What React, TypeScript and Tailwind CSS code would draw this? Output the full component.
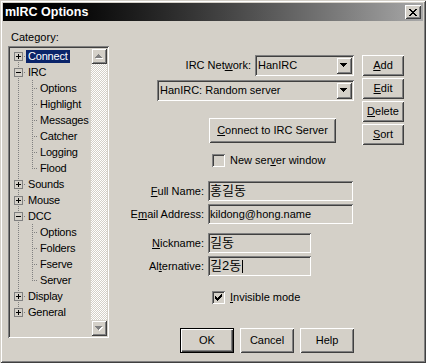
import React from 'react';

const FONT = "font-['Liberation_Sans','Noto_Sans_CJK_KR',sans-serif]";
const FRAME =
  'shadow-[inset_1px_1px_#d4d0c8,inset_-1px_-1px_#404040,inset_2px_2px_#fff,inset_-2px_-2px_#808080]';
const RAISED =
  'shadow-[inset_1px_1px_#fff,inset_-1px_-1px_#404040,inset_2px_2px_#d4d0c8,inset_-2px_-2px_#808080]';
const SUNKEN =
  'shadow-[inset_1px_1px_#808080,inset_-1px_-1px_#fff,inset_2px_2px_#404040,inset_-2px_-2px_#d4d0c8]';

interface TreeItem {
  label: string;
  level: 0 | 1;
  box?: 'plus' | 'minus';
  first?: boolean;
  last?: boolean;
  lastChild?: boolean;
  selected?: boolean;
}

const tree: TreeItem[] = [
  { label: 'Connect', level: 0, box: 'plus', first: true, selected: true },
  { label: 'IRC', level: 0, box: 'minus' },
  { label: 'Options', level: 1 },
  { label: 'Highlight', level: 1 },
  { label: 'Messages', level: 1 },
  { label: 'Catcher', level: 1 },
  { label: 'Logging', level: 1 },
  { label: 'Flood', level: 1, lastChild: true },
  { label: 'Sounds', level: 0, box: 'plus' },
  { label: 'Mouse', level: 0, box: 'plus' },
  { label: 'DCC', level: 0, box: 'minus' },
  { label: 'Options', level: 1 },
  { label: 'Folders', level: 1 },
  { label: 'Fserve', level: 1 },
  { label: 'Server', level: 1, lastChild: true },
  { label: 'Display', level: 0, box: 'plus' },
  { label: 'General', level: 0, box: 'plus', last: true },
];

function TreeLines({ item }: { item: TreeItem }) {
  const dot = { stroke: '#808080', strokeWidth: 1, strokeDasharray: '1 1' };
  if (item.level === 1) {
    return (
      <svg width="28" height="16" shapeRendering="crispEdges" className="shrink-0">
        <line x1="8.5" y1="0" x2="8.5" y2="16" {...dot} />
        <line x1="22.5" y1="0" x2="22.5" y2={item.lastChild ? 9 : 16} {...dot} />
        <line x1="24" y1="8.5" x2="28" y2="8.5" {...dot} />
      </svg>
    );
  }
  return (
    <svg width="16" height="16" shapeRendering="crispEdges" className="shrink-0">
      {!item.first && <line x1="8.5" y1="0" x2="8.5" y2="4" {...dot} />}
      {!item.last && <line x1="8.5" y1="14" x2="8.5" y2="16" {...dot} />}
      <line x1="14" y1="8.5" x2="16" y2="8.5" {...dot} />
      <rect x="4.5" y="4.5" width="8" height="8" fill="none" stroke="#808080" />
      <rect x="6" y="8" width="5" height="1" fill="#000" />
      {item.box === 'plus' && <rect x="8" y="6" width="1" height="5" fill="#000" />}
    </svg>
  );
}

function Arrow({ dir, color, shadow }: { dir: 'up' | 'down'; color: string; shadow?: boolean }) {
  const rows = [0, 1, 2, 3];
  const draw = (c: string, o: number) =>
    rows.map((i) => {
      const w = dir === 'up' ? 1 + 2 * i : 7 - 2 * i;
      const x = dir === 'up' ? 3 - i : i;
      return <rect key={`${c}${i}`} x={x + o} y={i + o} width={w} height="1" fill={c} />;
    });
  return (
    <svg width="8" height="5" shapeRendering="crispEdges" className="overflow-visible">
      {shadow && draw('#fff', 1)}
      {draw(color, 0)}
    </svg>
  );
}

function ScrollButton({ dir }: { dir: 'up' | 'down' }) {
  return (
    <div className={`flex h-[16px] w-[16px] items-center justify-center bg-[#d4d0c8] ${FRAME}`}>
      <Arrow dir={dir} color="#808080" shadow />
    </div>
  );
}

function Combo({ value, width }: { value: string; width: string }) {
  return (
    <div className={`flex h-[21px] items-center bg-[#d4d0c8] p-[2px] ${SUNKEN} ${width}`}>
      <span className="flex-1 truncate pl-[1px] leading-[13px]">{value}</span>
      <div className={`flex h-[17px] w-[16px] items-center justify-center bg-[#d4d0c8] ${FRAME}`}>
        <Arrow dir="down" color="#000" />
      </div>
    </div>
  );
}

function WinButton({
  children,
  className = '',
  isDefault = false,
}: {
  children: React.ReactNode;
  className?: string;
  isDefault?: boolean;
}) {
  return (
    <button
      type="button"
      className={`flex items-center justify-center bg-[#d4d0c8] leading-[13px] text-black ${
        isDefault
          ? 'border border-black shadow-[inset_1px_1px_#fff,inset_-1px_-1px_#404040,inset_-2px_-2px_#808080]'
          : RAISED
      } ${className}`}
    >
      {children}
    </button>
  );
}

function CheckBox({ checked, children }: { checked?: boolean; children: React.ReactNode }) {
  return (
    <div className="flex h-[13px] items-center gap-[5px]">
      <div className={`h-[13px] w-[13px] bg-[#d4d0c8] ${SUNKEN}`}>
        {checked && (
          <svg width="13" height="13" shapeRendering="crispEdges">
            {[2, 3, 4, 3, 2, 1, 0].map((y, i) => (
              <rect key={i} x={3 + i} y={3 + y} width="1" height="3" fill="#000" />
            ))}
          </svg>
        )}
      </div>
      <span className="leading-[13px]">{children}</span>
    </div>
  );
}

function Field({
  label,
  value,
  width,
  caret,
  valueClass = 'text-[13px]',
}: {
  label: React.ReactNode;
  value: string;
  width: string;
  caret?: boolean;
  valueClass?: string;
}) {
  return (
    <div className="flex h-[20px] items-center">
      <span className="w-[95px] shrink-0 whitespace-nowrap text-right leading-[13px]">{label}</span>
      <div className={`ml-[4px] flex h-[20px] items-center bg-[#d4d0c8] px-[2px] ${SUNKEN} ${width}`}>
        <span className={`leading-[14px] ${valueClass}`}>{value}</span>
        {caret && <span className="ml-[1px] h-[13px] w-[1px] bg-black" />}
      </div>
    </div>
  );
}

export default function App() {
  return (
    <div
      className={`flex h-[363px] w-[426px] flex-col bg-[#d4d0c8] p-[3px] text-[11px] text-black ${FONT} ${FRAME}`}
    >
      {/* Title bar */}
      <div className="flex h-[18px] shrink-0 items-center justify-between bg-gradient-to-r from-[#000000] to-[#a8a8a8] pl-[2px] pr-[2px]">
        <span className="text-[12.5px] font-bold leading-[14px] text-white">mIRC Options</span>
        <div className={`flex h-[14px] w-[16px] items-center justify-center bg-[#d4d0c8] ${RAISED}`}>
          <svg width="8" height="7" shapeRendering="crispEdges">
            {[0, 1, 2, 3, 4, 5, 6].map((r) => {
              const d = Math.min(r, 6 - r);
              return (
                <g key={r}>
                  <rect x={d} y={r} width="2" height="1" fill="#000" />
                  <rect x={6 - d} y={r} width="2" height="1" fill="#000" />
                </g>
              );
            })}
          </svg>
        </div>
      </div>

      <div className="flex flex-1">
        {/* Category tree */}
        <div className="flex w-[106px] shrink-0 flex-col pl-[5px]">
          <span className="ml-[3px] mt-[10px] leading-[13px]">Category:</span>
          <div className={`mt-[2px] flex h-[292px] w-[101px] bg-[#d4d0c8] p-[2px] ${SUNKEN}`}>
            <div className="flex w-[81px] flex-col overflow-hidden">
              {tree.map((item, i) => (
                <div key={i} className="flex h-[16px] shrink-0 items-center">
                  <TreeLines item={item} />
                  <span
                    className={`flex h-[13px] items-center whitespace-nowrap px-[2px] leading-[13px] tracking-[-0.2px] ${
                      item.selected ? 'bg-[#0a246a] text-white' : ''
                    }`}
                  >
                    {item.label}
                  </span>
                </div>
              ))}
            </div>
            <div className="flex w-[16px] flex-col">
              <ScrollButton dir="up" />
              <div className="flex-1 bg-[repeating-conic-gradient(#fff_0_25%,#d4d0c8_0_50%)] bg-[length:2px_2px]" />
              <ScrollButton dir="down" />
            </div>
          </div>
        </div>

        {/* Connect settings */}
        <div className="flex items-start pt-[34px]">
          <div className="flex w-[245px] flex-col">
            <div className="flex h-[21px] items-center justify-end">
              <span className="mr-[4px] leading-[13px]">
                IRC Net<u>w</u>ork:
              </span>
              <Combo value="HanIRC" width="w-[99px]" />
            </div>
            <div className="ml-[48px] mt-[4px]">
              <Combo value="HanIRC: Random server" width="w-[197px]" />
            </div>
            <WinButton className="ml-[100px] mt-[17px] h-[25px] w-[127px]">
              <span>
                <u>C</u>onnect to IRC Server
              </span>
            </WinButton>
            <div className="ml-[103px] mt-[11px]">
              <CheckBox>
                New ser<u>v</u>er window
              </CheckBox>
            </div>
            <div className="mt-[14px] flex flex-col">
              <Field
                label={
                  <>
                    <u>F</u>ull Name:
                  </>
                }
                value="홍길동"
                width="w-[145px]"
              />
              <div className="mt-[3px]">
                <Field
                  label={
                    <>
                      E<u>m</u>ail Address:
                    </>
                  }
                  value="kildong@hong.name"
                  width="w-[145px]"
                  valueClass="text-[11px]"
                />
              </div>
              <div className="mt-[9px]">
                <Field
                  label={
                    <>
                      <u>N</u>ickname:
                    </>
                  }
                  value="길동"
                  width="w-[103px]"
                />
              </div>
              <div className="mt-[3px]">
                <Field
                  label={
                    <>
                      Al<u>t</u>ernative:
                    </>
                  }
                  value="길2동"
                  width="w-[103px]"
                  caret
                />
              </div>
            </div>
            <div className="ml-[103px] mt-[15px]">
              <CheckBox checked>
                <u>I</u>nvisible mode
              </CheckBox>
            </div>
            <div className="ml-[71px] mt-[24px] flex gap-[6px]">
              <WinButton isDefault className="h-[25px] w-[54px]">
                OK
              </WinButton>
              <WinButton className="h-[25px] w-[54px]">Cancel</WinButton>
              <WinButton className="h-[25px] w-[54px]">Help</WinButton>
            </div>
          </div>

          <div className="ml-[8px] flex w-[42px] flex-col gap-[2px]">
            <WinButton className="h-[21px]">
              <span>
                <u>A</u>dd
              </span>
            </WinButton>
            <WinButton className="h-[21px]">
              <span>
                <u>E</u>dit
              </span>
            </WinButton>
            <WinButton className="h-[21px]">
              <span>
                <u>D</u>elete
              </span>
            </WinButton>
            <WinButton className="h-[21px]">
              <span>
                <u>S</u>ort
              </span>
            </WinButton>
          </div>
        </div>
      </div>
    </div>
  );
}
